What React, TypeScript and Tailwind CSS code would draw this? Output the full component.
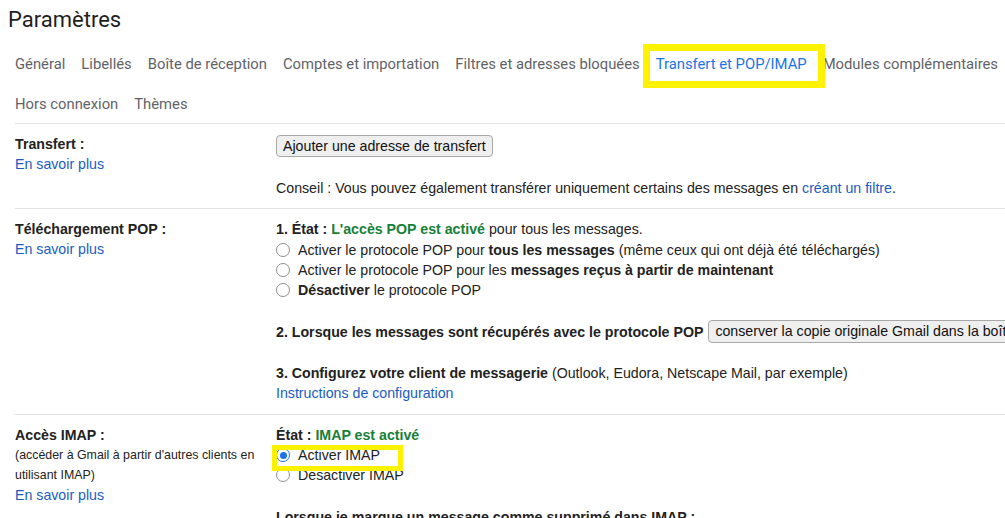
import React from "react";

const tabsRow1 = [
  "Général",
  "Libellés",
  "Boîte de réception",
  "Comptes et importation",
  "Filtres et adresses bloquées",
  "Transfert et POP/IMAP",
  "Modules complémentaires",
];
const tabsRow2 = ["Hors connexion", "Thèmes"];

function Radio({ checked = false }: { checked?: boolean }) {
  return (
    <span
      className={
        "mr-[8px] inline-flex h-[14px] w-[14px] shrink-0 items-center justify-center rounded-full border-[1.5px] " +
        (checked ? "border-[#1a73e8]" : "border-[#8e8e8e]")
      }
    >
      {checked && <span className="h-[7px] w-[7px] rounded-full bg-[#1a73e8]" />}
    </span>
  );
}

function Link({ children }: { children: React.ReactNode }) {
  return <span className="text-[#1a5cc4]">{children}</span>;
}

export default function App() {
  return (
    <div className="h-[518px] w-[1005px] overflow-hidden bg-white font-['Liberation_Sans',Arial,sans-serif] text-[14.2px] leading-[20px] text-[#222]">
      <h1 className="pl-[8px] pt-[6px] font-['Roboto',sans-serif] text-[22px] leading-[28px] text-[#1f1f1f]">
        Paramètres
      </h1>

      <nav className="pl-[15px] pt-[20px] font-['Roboto',sans-serif] text-[14.8px] leading-[20px] text-[#5f6368]">
        <div className="flex gap-[16px] whitespace-nowrap">
          {tabsRow1.map((t) =>
            t === "Transfert et POP/IMAP" ? (
              <span key={t} className="relative text-[#1a73e8]">
                {t}
                <span className="absolute -top-[10px] -bottom-[14px] -left-[13px] -right-[18px] border-[7px] border-[#fff200]" />
              </span>
            ) : (
              <span key={t}>{t}</span>
            ),
          )}
        </div>
        <div className="mt-[20px] flex gap-[16px]">
          {tabsRow2.map((t) => (
            <span key={t}>{t}</span>
          ))}
        </div>
      </nav>

      <div className="ml-[15px] mt-[9px]">
        {/* Transfert */}
        <section className="flex border-t border-[#e3e3e3] pt-[10px] pb-[10px]">
          <div className="w-[261px] shrink-0">
            <p className="font-bold">Transfert :</p>
            <Link>En savoir plus</Link>
          </div>
          <div>
            <button className="mt-[1px] h-[22px] rounded-[4px] border border-[#a8a8a8] bg-[#efefef] px-[6px] leading-[20px] text-[#111]">
              Ajouter une adresse de transfert
            </button>
            <p className="mt-[21px] whitespace-nowrap">
              Conseil : Vous pouvez également transférer uniquement certains des messages en{" "}
              <Link>créant un filtre</Link>.
            </p>
          </div>
        </section>

        {/* POP */}
        <section className="flex border-t border-[#e3e3e3] pt-[10px] pb-[11px]">
          <div className="w-[261px] shrink-0">
            <p className="font-bold">Téléchargement POP :</p>
            <Link>En savoir plus</Link>
          </div>
          <div className="whitespace-nowrap">
            <p>
              <b>1. État : </b>
              <b className="text-[#188038]">L'accès POP est activé</b> pour tous les messages.
            </p>
            <p className="flex items-center pt-[1px]">
              <Radio />
              <span>
                Activer le protocole POP pour <b>tous les messages</b> (même ceux qui ont déjà été téléchargés)
              </span>
            </p>
            <p className="flex items-center">
              <Radio />
              <span>
                Activer le protocole POP pour les <b>messages reçus à partir de maintenant</b>
              </span>
            </p>
            <p className="flex items-center">
              <Radio />
              <span>
                <b>Désactiver</b> le protocole POP
              </span>
            </p>
            <div className="mt-[20px] flex items-center">
              <b>2. Lorsque les messages sont récupérés avec le protocole POP</b>
              <span className="ml-[5px] h-[23px] rounded-l-[4px] border border-[#a8a8a8] bg-[#efefef] px-[6px] leading-[21px] text-[#111]">
                conserver la copie originale Gmail dans la boîte de réception
              </span>
            </div>
            <p className="mt-[20px]">
              <b>3. Configurez votre client de messagerie</b> (Outlook, Eudora, Netscape Mail, par exemple)
            </p>
            <Link>Instructions de configuration</Link>
          </div>
        </section>

        {/* IMAP */}
        <section className="flex border-t border-[#e3e3e3] pt-[10px]">
          <div className="w-[261px] shrink-0">
            <p className="font-bold">Accès IMAP :</p>
            <p className="text-[12.4px]">(accéder à Gmail à partir d'autres clients en</p>
            <p className="text-[12.4px]">utilisant IMAP)</p>
            <Link>En savoir plus</Link>
          </div>
          <div className="whitespace-nowrap">
            <p>
              <b>État : </b>
              <b className="text-[#188038]">IMAP est activé</b>
            </p>
            <p className="relative flex items-center">
              <Radio checked />
              <span>Activer IMAP</span>
              <span className="absolute -left-[4px] top-0 h-[26px] w-[131px] border-[5px] border-[#fff200]" />
            </p>
            <p className="flex items-center">
              <Radio />
              <span>Désactiver IMAP</span>
            </p>
            <p className="mt-[22px] font-bold">Lorsque je marque un message comme supprimé dans IMAP :</p>
          </div>
        </section>
      </div>
    </div>
  );
}
